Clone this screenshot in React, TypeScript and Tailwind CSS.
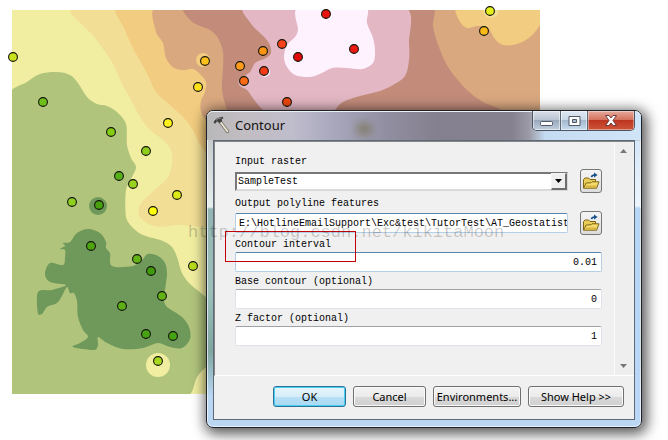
import type { ReactNode } from "react";

type Point = [number, number];

const DOTS: [number, number, string][] = [
  [13, 57, "#c9e21c"], [43, 102, "#6fbf1a"], [111, 132, "#84cc14"], [146, 151, "#8fce1e"],
  [119, 176, "#57b01a"], [133, 184, "#9bd21e"], [72, 202, "#8fd01f"], [99, 205, "#49a00e"],
  [91, 246, "#4ea40f"], [137, 259, "#62b414"], [151, 271, "#3f9a0a"], [193, 266, "#b9dd1c"],
  [122, 306, "#5bb014"], [162, 296, "#61b214"], [146, 334, "#46a312"], [173, 336, "#46a312"],
  [158, 361, "#a8d81e"], [177, 195, "#dcea1a"], [153, 211, "#ffff0a"], [168, 123, "#fff21a"],
  [198, 87, "#ffe11a"], [205, 61, "#ffc01a"], [240, 66, "#ff9b1a"], [263, 51, "#ff9410"],
  [244, 81, "#fb6a14"], [282, 44, "#f8431a"], [264, 71, "#f03a18"], [298, 57, "#e10a0a"],
  [326, 14, "#e8140f"], [354, 49, "#ec1a12"], [287, 102, "#f0480f"], [490, 11, "#e4f01c"],
  [484, 31, "#f9b916"],
];

const CONTOURS: { fill: string; points: Point[] }[] = [
  {
    fill: "#f2de95",
    points: [[73, 8], [95, 38], [112, 62], [121, 82], [130, 98], [140, 117], [150, 130], [163, 140], [171, 150], [172, 163], [168, 177], [150, 194], [140, 205], [139, 215], [147, 223], [160, 227], [177, 225], [205, 227], [540, 227], [540, 8]],
  },
  {
    fill: "#f2cc80",
    points: [[117, 8], [124, 28], [134, 50], [148, 75], [156, 92], [170, 105], [183, 117], [193, 130], [199, 143], [206, 154], [225, 230], [540, 230], [540, 8]],
  },
  {
    fill: "#d9a87f",
    points: [[156, 8], [156, 32], [163, 43], [166, 58], [174, 68], [185, 70], [193, 69], [200, 74], [206, 82], [205, 92], [201, 101], [201, 112], [207, 124], [225, 200], [545, 200], [545, 8]],
  },
  {
    fill: "#c28b7a",
    points: [[184, 8], [190, 20], [200, 26], [210, 30], [218, 38], [223, 52], [223, 68], [222, 90], [227, 110], [240, 150], [545, 150], [503, 111], [483, 102], [467, 90], [450, 70], [440, 50], [433, 27], [432, 8]],
  },
  {
    fill: "#e3b8c4",
    points: [[244, 8], [252, 25], [260, 33], [269, 43], [271, 53], [266, 58], [255, 63], [250, 72], [239, 80], [240, 86], [247, 90], [255, 101], [263, 110], [285, 130], [320, 130], [335, 110], [343, 102], [360, 96], [380, 91], [393, 85], [405, 76], [409, 60], [409, 43], [405, 8]],
  },
  {
    fill: "#fdf2fe",
    points: [[298, 8], [298, 30], [295, 37], [287, 45], [284, 57], [287, 67], [295, 75], [310, 77], [322, 73], [332, 68], [347, 68], [362, 69], [373, 63], [375, 52], [373, 38], [367, 23], [366, 8]],
  },
  {
    fill: "#f2cc80",
    points: [[457, 8], [459, 20], [467, 28], [478, 26], [488, 28], [495, 39], [503, 45], [517, 44], [530, 37], [541, 23], [542, 8]],
  },
  {
    fill: "#b0c47c",
    points: [[10, 94], [27, 82], [40, 74], [57, 72], [70, 75], [78, 83], [87, 97], [97, 104], [107, 106], [117, 112], [126, 124], [127, 145], [131, 158], [136, 167], [132, 177], [126, 190], [126, 217], [132, 227], [143, 235], [163, 241], [172, 247], [177, 257], [182, 273], [190, 284], [207, 298], [230, 320], [225, 350], [205, 368], [197, 377], [187, 396], [100, 397], [10, 397]],
  },
  {
    fill: "#6f985b",
    points: [[88, 229], [77, 233], [70, 242], [63, 243], [65, 246], [60, 249], [65, 250], [65, 257], [63, 265], [50, 263], [45, 274], [50, 282], [66, 285], [52, 290], [38, 292], [38, 314], [42, 314], [47, 307], [57, 303], [62, 296], [67, 287], [70, 293], [74, 293], [77, 301], [78, 317], [83, 330], [88, 337], [80, 343], [73, 347], [95, 350], [98, 345], [98, 337], [107, 343], [123, 349], [143, 348], [158, 343], [170, 347], [182, 348], [190, 339], [189, 327], [182, 317], [167, 307], [164, 300], [166, 283], [167, 273], [165, 263], [158, 256], [148, 254], [142, 260], [133, 266], [112, 266], [110, 253], [106, 248], [106, 242], [100, 233]],
  },
];

function smoothPath(points: Point[]): string {
  const n = points.length;
  const k = 6;
  let d = `M${points[0][0]} ${points[0][1]}`;
  for (let i = 0; i < n; i++) {
    const a = points[(i - 1 + n) % n];
    const b = points[i];
    const c = points[(i + 1) % n];
    const e = points[(i + 2) % n];
    const span = Math.hypot(c[0] - b[0], c[1] - b[1]);
    const pull = (p: Point, q: Point): Point => {
      const len = Math.hypot(q[0] - p[0], q[1] - p[1]) || 1;
      const f = Math.min(1 / k, (span * 0.33) / len);
      return [(q[0] - p[0]) * f, (q[1] - p[1]) * f];
    };
    const u = pull(a, c);
    const v = pull(b, e);
    d += `C${b[0] + u[0]} ${b[1] + u[1]} ${c[0] - v[0]} ${c[1] - v[1]} ${c[0]} ${c[1]}`;
  }
  return d + "Z";
}

function ContourMap() {
  return (
    <svg className="block overflow-visible" width="528" height="384" viewBox="12 10 528 384" role="img" aria-label="Raster surface with sample points">
      <defs>
        <clipPath id="extent">
          <rect x="12" y="10" width="528" height="384" />
        </clipPath>
      </defs>
      <g clipPath="url(#extent)">
        <rect x="12" y="10" width="528" height="384" fill="#f1eea2" />
        {CONTOURS.map((c, i) => (
          <path key={i} d={smoothPath(c.points)} fill={c.fill} />
        ))}
        <circle cx="98" cy="206" r="9" fill="#6f985b" />
        <circle cx="158" cy="365" r="12" fill="#f1eea2" />
        <circle cx="203" cy="60" r="7" fill="#f2cc80" />
        <circle cx="265" cy="72" r="5" fill="#fdf2fe" />
        <circle cx="491" cy="10" r="8" fill="#f2de95" />
      </g>
      {DOTS.map(([x, y, fill]) => (
        <circle key={`${x}-${y}`} cx={x} cy={y} r="4.4" fill={fill} stroke="#14140a" strokeWidth="1.1" />
      ))}
    </svg>
  );
}

function HammerIcon() {
  return (
    <svg width="17" height="18" viewBox="0 0 17 18" aria-hidden="true">
      <path d="M7 5.5L14.5 15.5" stroke="#77736a" strokeWidth="3.4" strokeLinecap="round" />
      <path d="M7.2 5.8L14.4 15.2" stroke="#ece6d2" strokeWidth="1.8" strokeLinecap="round" />
      <path d="M0.6 6.8C1.6 3.6 4 1.6 9.8 0.8L10.4 2.2L8.6 3.4L9.2 5.2L6.4 7.2L4.8 5.4C3.6 5.2 2.8 6.4 2.4 7.8Z" fill="#41413f" />
      <path d="M3 4.4C4.6 2.8 6.4 2.2 8.4 1.9" stroke="#a5a5a2" strokeWidth="0.8" fill="none" />
    </svg>
  );
}

function FolderIcon() {
  return (
    <svg width="18" height="18" viewBox="0 0 18 18" className="shrink-0" aria-hidden="true">
      <path d="M1.5 16V7.5L3 6H6.5L8 7.5H13.5V10" fill="#e9cc58" stroke="#7d6415" />
      <path d="M1.5 16.2L4.2 11L9 10.8L10 9.8H17L14.6 16.2Z" fill="#f5da6c" stroke="#7d6415" strokeLinejoin="round" />
      <path d="M3.2 15.4H13.8L14.6 13.4H4.2Z" fill="#d9b440" />
      <path d="M9.5 5.2C9.8 3.6 10.8 3 12.5 3" fill="none" stroke="#16508a" strokeWidth="1.6" />
      <path d="M12 0.4L15.6 3L12 5.6Z" fill="#16508a" />
    </svg>
  );
}

const inputBase = "h-5 w-full min-w-0 rounded-[2px] border bg-white outline-none";
const activeBorder = "border-[#b5cfe7] border-t-[#5584ad]";
const plainBorder = "border-[#e2e3ea] border-t-[#a0a2a8]";

function FieldLabel({ id, children }: { id: string; children: ReactNode }) {
  return (
    <label htmlFor={id} className="block h-[17px] whitespace-pre leading-[20px]">
      {children}
    </label>
  );
}

function BrowseButton({ label }: { label: string }) {
  return (
    <button type="button" aria-label={label} className="flex h-6 w-[22px] shrink-0 items-center justify-center rounded-[3px] border border-[#777] bg-gradient-to-b from-[#f5f5f5] to-[#dcdcdc]">
      <FolderIcon />
    </button>
  );
}

function NumberField({ id, label, value, active, children }: { id: string; label: string; value: string; active?: boolean; children?: ReactNode }) {
  return (
    <div className="relative">
      <FieldLabel id={id}>{label}</FieldLabel>
      <input id={id} defaultValue={value} className={`${inputBase} block pr-1 text-right ${active ? activeBorder : plainBorder}`} />
      {children}
    </div>
  );
}

function DialogButton({ children, className }: { children: ReactNode; className: string }) {
  return (
    <button type="button" className={`h-[21px] whitespace-nowrap rounded-[3px] border text-[11px] leading-[17px] ${className}`}>
      {children}
    </button>
  );
}

const greyButton = "border-[#707070] bg-[linear-gradient(#f3f3f3_0%,#ebebeb_50%,#dadada_51%,#cfcfcf_100%)] shadow-[inset_0_0_0_1px_#fafafa]";

function ContourDialog() {
  return (
    <section aria-label="Contour" className="absolute left-[206px] top-[110px] w-[436px] rounded-[7px] border border-[#1d2228] bg-[linear-gradient(#b9bbbd_0px,#d7dcdc_60px,#e6eeee_96px,#92b5b3_98px,#9cbfba_180px,#80a6a0_240px,#b9d6f2_285px)] px-[6px] pb-[7px] shadow-[2px_3px_13px_3px_rgba(0,0,0,0.65),inset_0_0_0_1px_rgba(255,255,255,0.65)]">
      <div aria-hidden="true" className="absolute bottom-[7px] right-px top-[30px] w-[5px] bg-[linear-gradient(#d6e7f8_0px,#edf5fd_65px,#b7d5f5_67px,#bad7f6_100%)]" />
      <header className="relative -mx-[6px] flex h-[29px] items-start rounded-t-[6px] border-t border-[#eef0f4] bg-[linear-gradient(90deg,#b9b8b9_0px,#c2bdc3_40px,#c0bdcc_85px,#a9a8bd_125px,#918ea1_180px,#85808f_230px,#86818f_305px,#9c9aa6_322px,#c5dbf1_338px,#d0e5f8_100%)] px-[6px]">
        <span aria-hidden="true" className="absolute left-[149px] top-[11px] h-3 w-4 rounded-full bg-[#77724f] opacity-70 blur-[4px]" />
        <div className="flex items-center gap-[5px] pt-1">
          <HammerIcon />
          <h1 className="font-['Noto_Sans'] text-[13px] leading-[18px] text-[#111]">Contour</h1>
        </div>
        <div className="-mt-px ml-auto flex h-[20px] overflow-hidden rounded-b-[5px] border border-t-0 border-[#4b5460]">
          <button type="button" aria-label="Minimize" className="flex w-[28px] items-center justify-center border-r border-[#5b6674] bg-[linear-gradient(#d9dfe8_0%,#bac4d3_45%,#99a8bb_50%,#c1d0e0_100%)] shadow-[inset_0_0_0_1px_rgba(255,255,255,0.5)]">
            <svg width="13" height="5" viewBox="0 0 13 5" className="mt-[5px]" aria-hidden="true">
              <rect x="0.5" y="0.5" width="12" height="4" rx="1" fill="#fff" stroke="#515966" />
            </svg>
          </button>
          <button type="button" aria-label="Maximize" className="flex w-[27px] items-center justify-center border-r border-[#5b6674] bg-[linear-gradient(#e0e8f1_0%,#c9d8e8_45%,#a4b9ce_50%,#c7dcef_100%)] shadow-[inset_0_0_0_1px_rgba(255,255,255,0.5)]">
            <svg width="13" height="10" viewBox="0 0 13 10" aria-hidden="true">
              <path fillRule="evenodd" d="M1 0.5H12V9.5H1ZM4.5 3.5V6.5H8.5V3.5Z" fill="#fff" stroke="#515966" />
            </svg>
          </button>
          <button type="button" aria-label="Close" className="flex w-[46px] items-center justify-center bg-[linear-gradient(#e6a99b_0%,#d5735f_45%,#bd3520_50%,#cf5638_100%)] shadow-[inset_0_0_0_1px_rgba(255,255,255,0.4)]">
            <svg width="14" height="11" viewBox="0 0 14 11" aria-hidden="true">
              <path d="M1.5 0.5H5L7 3L9 0.5H12.5L9 5.5L12.5 10.5H9L7 8L5 10.5H1.5L5 5.5Z" fill="#fff" stroke="#6a3a3c" />
            </svg>
          </button>
        </div>
      </header>

      <div className="relative border border-[#5d6b78] bg-[#f0f0f0]">
        <div className="flex border-b border-l border-t border-b-white border-l-[#858585] border-t-[#858585]">
          <form className="min-w-0 flex-1 pb-[29px] pl-[20px] pr-[12px] pt-[10px] font-['Liberation_Mono',monospace] text-[10px] text-black">
            <FieldLabel id="raster">Input raster</FieldLabel>
            <div className="mb-px flex items-center gap-3">
              <div className="relative min-w-0 flex-1">
                <select id="raster" className="block h-[19px] w-full appearance-none border-2 border-[#dadada] border-l-[#777] border-t-[#777] bg-white pl-px outline-none">
                  <option>SampleTest</option>
                </select>
                <span aria-hidden="true" className="pointer-events-none absolute right-px top-px flex h-[17px] w-4 items-center justify-center border border-b-2 border-r-2 border-[#6e6e6e] border-l-[#f4f4f4] border-t-[#f4f4f4] bg-[#efefef]">
                  <svg width="7" height="4" viewBox="0 0 7 4">
                    <path d="M0 0H7L3.5 4Z" fill="#000" />
                  </svg>
                </span>
              </div>
              <BrowseButton label="Browse input raster" />
            </div>
            <FieldLabel id="output">Output polyline features</FieldLabel>
            <div className="flex items-center gap-3">
              <div className="min-w-0 flex-1">
                <input id="output" defaultValue="E:\HotlineEmailSupport\Exc&test\TutorTest\AT_Geostatistical" className={`block pl-[3px] ${inputBase} ${activeBorder}`} />
              </div>
              <BrowseButton label="Browse output features" />
            </div>
            <NumberField id="interval" label="Contour interval" value="0.01" active>
              <span aria-hidden="true" className="pointer-events-none absolute -left-[10px] -top-1 h-[31px] w-[131px] border border-red-700" />
            </NumberField>
            <NumberField id="base" label="Base contour (optional)" value="0" />
            <NumberField id="zfactor" label="Z factor (optional)" value="1" />
          </form>
          <div aria-hidden="true" className="mr-[2px] flex w-[18px] flex-col items-center justify-between border-l border-[#fafafa] bg-[#eeeeee] py-[7px]">
            <svg width="7" height="4" viewBox="0 0 7 4"><path d="M0 4H7L3.5 0Z" fill="#777" /></svg>
            <svg width="7" height="4" viewBox="0 0 7 4"><path d="M0 0H7L3.5 4Z" fill="#777" /></svg>
          </div>
        </div>
        <footer className="flex justify-end gap-[7px] pb-[12px] pr-[10px] pt-[10px] font-['Noto_Sans'] text-black">
          <DialogButton className="w-[73px] border-[#2c7396] bg-[linear-gradient(#e6f5fc_0%,#d5eefa_50%,#b8e0f5_51%,#a9d9f2_100%)] shadow-[inset_0_0_0_1px_#48cdf3]">OK</DialogButton>
          <DialogButton className={`w-[73px] ${greyButton}`}>Cancel</DialogButton>
          <DialogButton className={`w-[88px] ${greyButton}`}>Environments...</DialogButton>
          <DialogButton className={`w-[96px] ${greyButton}`}>Show Help &gt;&gt;</DialogButton>
        </footer>
      </div>
    </section>
  );
}

export default function App() {
  return (
    <main className="relative min-h-screen overflow-hidden bg-white pl-3 pt-[10px]">
      <ContourMap />
      <ContourDialog />
      <p className="pointer-events-none absolute left-[188px] top-[225px] font-['Liberation_Mono',monospace] text-[17px] leading-[16px] text-black/20">
        http://blog.csdn.net/kikitaMoon
      </p>
    </main>
  );
}
